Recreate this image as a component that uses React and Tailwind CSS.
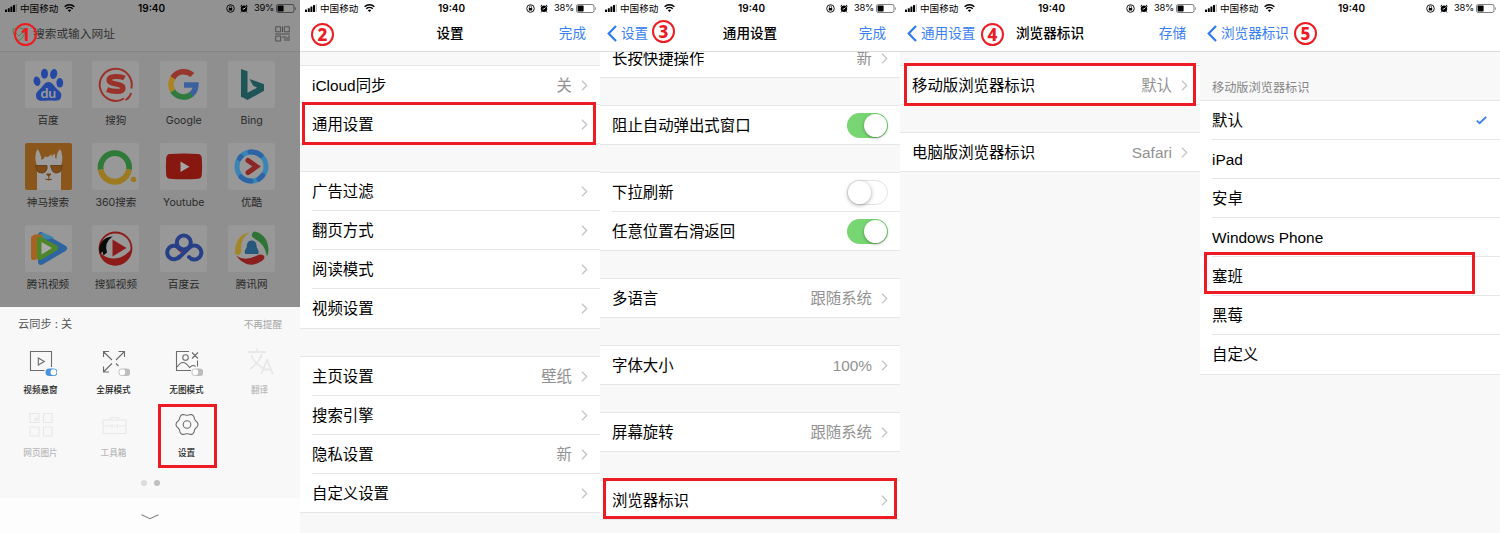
import clsx from "clsx";

const FONT = "font-['Inter','Noto_Sans_CJK_SC',sans-serif]";

function StatusBar({ battery }) {
  return (
    <div className="flex h-[16px] items-center pl-[5px] pr-[4px] text-[9.6px] leading-none text-black">
      <svg width="13" height="8" viewBox="0 0 13 8" className="shrink-0">
        <rect x="0" y="5.4" width="2" height="2.6" rx=".5" />
        <rect x="2.8" y="4.2" width="2" height="3.8" rx=".5" />
        <rect x="5.4" y="2.6" width="2" height="5.4" rx=".5" />
        <rect x="8" y="1" width="2" height="7" rx=".5" />
        <rect x="10.6" y="0" width="1.4" height="8" fillOpacity=".25" />
      </svg>
      <span className="ml-[2px] w-[39px] pt-px whitespace-nowrap">中国移动</span>
      <svg width="11" height="8" viewBox="0 0 11 8" className="ml-[5px]">
        <path d="M.6 2.8a7 7 0 0 1 9.8 0M2.3 4.7a4.6 4.6 0 0 1 6.4 0" fill="none" stroke="#000" strokeWidth="1.4" />
        <path d="M3.8 6.2a2.5 2.5 0 0 1 3.4 0L5.5 8z" />
      </svg>
      <span className="ml-[63px] w-[27px] text-[10px] font-semibold">19:40</span>
      <div className="ml-auto flex items-center">
        <svg width="9" height="9" viewBox="0 0 9 9">
          <circle cx="4.5" cy="4.5" r="3.8" fill="none" stroke="#000" strokeWidth=".9" />
          <rect x="2.8" y="4" width="3.4" height="2.5" />
          <path d="M3.4 4V3a1.1 1.1 0 0 1 2.2 0v1" fill="none" stroke="#000" strokeWidth=".6" />
        </svg>
        <svg width="8" height="9" viewBox="0 0 8 9" className="ml-[5px]">
          <circle cx="4" cy="4.8" r="3.2" />
          <path d="M.5 2.3 2 .9M7.5 2.3 6 .9M1.7 7.4l-.7 1M6.3 7.4l.7 1" stroke="#000" strokeWidth="1" />
          <path d="M4 5 5.6 3.4M4 5H2.6" stroke="#fff" strokeWidth=".8" />
        </svg>
        <span className="ml-[6px] w-[20px] whitespace-nowrap text-[9.4px] tracking-[-0.25px]">{battery}%</span>
        <svg width="20" height="9" viewBox="0 0 20 9" className="ml-[2px]">
          <rect x=".5" y=".5" width="17.500" height="8" rx="1.8" fill="none" stroke="#000" strokeOpacity=".5" />
          <rect x="1.6" y="1.6" width="6" height="5.8" rx=".6" />
          <path d="M19 3v3q.8-.4.8-1.5T19 3" fillOpacity=".5" />
        </svg>
      </div>
    </div>
  );
}

function Step({ n, className }) {
  return (
    <span
      className={clsx(
        "absolute z-20 flex size-[23px] items-center justify-center rounded-full border-2 border-[#ed1c24] font-['Noto_Sans','Open_Sans',sans-serif] text-[17px] leading-none font-extrabold text-[#ed1c24]",
        className
      )}>
      {n}
    </span>
  );
}

function Highlight({ className }) {
  return <div className={clsx("absolute z-20 border-3 border-[#ed1c24]", className)} />;
}

function NavBar({ back, title, action }) {
  return (
    <div className="relative z-10 grid h-[36px] grid-cols-[1fr_auto_1fr] items-center border-b border-[#dcdcdf] bg-white px-[14px] text-[13.6px] text-[#3a80f7]">
      <div className="-ml-[7px] flex items-center">
        {back && (
          <>
            <svg width="10" height="17" viewBox="0 0 10 17" className="mr-[4px]">
              <path d="M9 1 1.7 8.5 9 16" fill="none" stroke="#2f7bf6" strokeWidth="2.2" />
            </svg>
            <span className="whitespace-nowrap">{back}</span>
          </>
        )}
      </div>
      <span className="font-medium whitespace-nowrap text-black">{title}</span>
      <span className="text-right">{action}</span>
    </div>
  );
}

function Chevron() {
  return (
    <svg width="7" height="11" viewBox="0 0 7 11" className="ml-[9px] shrink-0">
      <path d="M1 .8 5.7 5.5 1 10.2" fill="none" stroke="#c4c4c8" strokeWidth="1.3" />
    </svg>
  );
}

function Switch({ on }) {
  return (
    <span
      className={clsx(
        "flex h-[25px] w-[41px] items-center rounded-full",
        on ? "justify-end bg-[#77d572] pr-px" : "border border-[#e4e4e6] bg-white"
      )}>
      <span
        className={clsx(
          "size-[23px] rounded-full bg-white",
          on ? "shadow-[0_1px_3px_rgba(0,0,0,0.35)]" : "shadow-[0_1px_4px_rgba(0,0,0,0.35)]"
        )}
      />
    </span>
  );
}

function Row({ row }) {
  return (
    <div className="group pl-[12px] last:pl-0">
      <div
        className={clsx(
          "flex items-center border-b border-[#e6e6e8] pr-[12px] font-['Liberation_Sans','Noto_Sans_CJK_SC',sans-serif] text-[15.4px] group-last:pl-[12px]",
          row.tall ? "h-[40px]" : "h-[39px]"
        )}>
        <span className="pt-px whitespace-nowrap text-black">{row.label}</span>
        <span className="ml-auto pt-px whitespace-nowrap text-[#929292]">{row.value}</span>
        {row.on !== undefined && <Switch on={row.on} />}
        {row.checked && (
          <svg width="11" height="9" viewBox="0 0 11 9" className="mr-px">
            <path d="M.8 4.6 3.6 7.3 10.2.9" fill="none" stroke="#3a80f7" strokeWidth="1.9" />
          </svg>
        )}
        {row.on === undefined && !row.plain && <Chevron />}
      </div>
    </div>
  );
}

function Group({ rows, className }) {
  return (
    <div className={clsx("border-t border-[#e6e6e8] bg-white", className)}>
      {rows.map((row) => (
        <Row key={row.label} row={row} />
      ))}
    </div>
  );
}

function Phone({ children, battery = 38, back, title, action }) {
  return (
    <section className="relative h-full w-[300px] shrink-0 overflow-hidden bg-[#f8f8f8]">
      <div className="relative z-10 bg-white">
        <StatusBar battery={battery} />
        <NavBar back={back} title={title} action={action} />
      </div>
      {children}
    </section>
  );
}

/* ---- site logos, all on a 47x47 tile ---- */

const logos = {
  百度: (
    <g fill="#2548a4">
      <ellipse cx="19.5" cy="12.8" rx="3.5" ry="5" />
      <ellipse cx="28.7" cy="13" rx="3.5" ry="5" transform="rotate(12 28.7 13)" />
      <ellipse cx="12" cy="20.300" rx="3.4" ry="4.8" transform="rotate(-12 12 20.300)" />
      <ellipse cx="34.800" cy="21.800" rx="3.4" ry="4.8" />
      <path d="M23.5 21c4 0 5.500 4.500 9 7.500 3.500 3 4.500 4.500 3.500 8-1.500 4.500-7 3-12.500 3s-10 1.500-12-2.500c-1.500-4 .5-6.500 3.500-9s4.500-7 8.500-7z" />
      <text x="23.3" y="37" fill="#999" fontSize="14" fontWeight="700" textAnchor="middle" fontFamily="Lato">
        du
      </text>
    </g>
  ),
  搜狗: (
    <g fill="none" stroke="#9b3229">
      <path d="M32 37.500A16 16 0 1 1 39.300 27.500" strokeWidth="2" />
      <path d="M33.500 39q4.500-2.500 5.500-7" strokeWidth="2" />
      <path d="M32.500 17c-4-2-15.500-2.600-15.500 2 0 5 14 3 14 8 0 5-10.500 3.700-16 1.600" strokeWidth="5.200" />
    </g>
  ),
  Google: (
    <g fill="none" strokeWidth="5.600">
      <path d="M32.300 14A12.700 12.700 0 0 0 12.800 17" stroke="#96362d" />
      <path d="M12.800 17a12.700 12.700 0 0 0 0 13" stroke="#ac8323" />
      <path d="M12.800 30a12.700 12.700 0 0 0 19 3" stroke="#2f7a3f" />
      <path d="M31.300 33.500q4.200-3.500 4.500-9.500H24" stroke="#3c619f" />
    </g>
  ),
  Bing: (
    <g fill="#1f5557">
      <path d="M13 8l6.500 2.200v22.300L13 36.500z" />
      <path d="M13 35.500l6.500-3.700 9.500-5-4-2.300-3.500-6.500L36 23.200v6.600L19.500 39z" />
    </g>
  ),
  神马搜索: (
    <g>
      <rect width="47" height="47" fill="#8b561c" />
      <path
        d="M12 47V24Q8.500 12 12.500 6q3.500 4.500 4 11l3-2-.5-1.500 4 .5 3.500-3v2.500L30 10.500v4l1.500 1.500Q31.500 10 35 6q4 6 1 18v23z"
        fill="#9c9c9c"
      />
      <path d="M10.500 22.500h11.500v3q-1 4.500-5.500 4.500T11.500 26zM25.500 22.500H37.500l-1 3.500q-1 4-5 4t-5-4.500z" fill="#7e4c18" stroke="#68411a" />
      <path d="M21.5 31h4.500l-2.200 2.500zM23.800 33.500V36M20.500 36q3.200 2 6.500 0" fill="#744314" stroke="#744314" />
    </g>
  ),
  "360搜索": (
    <g fill="none" strokeWidth="5.800">
      <path d="M8.700 26.500a14.300 14.300 0 1 1 28.300 0" stroke="#2f7a38" />
      <path d="M8.700 26.500a14.300 14.300 0 0 0 28.300 0" stroke="#9c7a22" />
      <circle cx="41.500" cy="36.500" r="2.800" fill="#9c7a22" stroke="none" />
    </g>
  ),
  Youtube: (
    <g>
      <path d="M10 11q14-1 28 0 3.500.3 3.800 4 .7 9 0 17-.3 3.500-3.800 3.800-14 1-28 0-3.500-.3-3.800-3.800-.7-8 0-17 .3-3.700 3.800-4z" fill="#861811" />
      <path d="M20.500 18.500v10.500l9-5.200z" fill="#a5a5a5" />
    </g>
  ),
  优酷: (
    <g fill="none" strokeLinecap="round">
      <circle cx="23.500" cy="23.500" r="14.500" stroke="#3a85b5" strokeWidth="5" />
      <path d="M13 13.500a14.500 14.500 0 0 0-1.500 2M34.500 32.500A14.500 14.500 0 0 1 31 36M22 9a14.500 14.500 0 0 1 11 3.500M13 34a14.500 14.500 0 0 0 10 4" stroke="#2c64a5" strokeWidth="5" />
      <path d="M20 17.500l8.500 6-8.500 6" stroke="#8c2627" strokeWidth="5" />
    </g>
  ),
  腾讯视频: (
    <g strokeLinejoin="round">
      <path d="M16 10v27l23-13.700z" fill="#2e649f" stroke="#2e649f" strokeWidth="6" />
      <path d="M14 9.500l4-1.700q6 2 11 5l-8 2z" fill="#3a85a8" />
      <path d="M8 13v20q4 0 8-4V12q-5-2-8 1z" fill="#a76321" stroke="#a76321" strokeWidth="4" />
      <path d="M15 15v17l15-9z" fill="#4f8629" stroke="#4f8629" strokeWidth="6" />
      <path d="M16.500 17v12.500l10.500-6.500z" fill="#aaa" />
    </g>
  ),
  搜狐视频: (
    <g>
      <circle cx="23.500" cy="23.500" r="16" fill="none" stroke="#8c1b19" strokeWidth="1.800" />
      <path d="M7 25c5 11 23 12 32-1-.500 11-9 16.500-16 16.500S8 36 7 25z" fill="#8c1b19" />
      <path d="M21 11.500q-12 .5-14 12.500l1 5 2.500-2.500 1 4 3.500-3q-3-10 5-15.500z" fill="#0b0b0b" />
      <path d="M20.500 14.500v17l14-8.500z" fill="#8c1b1c" />
    </g>
  ),
  百度云: (
    <g fill="none" stroke="#263f87" strokeWidth="4">
      <path d="M17 21.500l5.500 5" stroke="#7d2d35" />
      <circle cx="23.800" cy="17.500" r="7" />
      <path d="M19.500 31.500a6.800 6.800 0 1 1 0-8M18.500 33l11-10.500a7 7 0 1 1-.5 9.500" strokeLinecap="round" />
    </g>
  ),
  腾讯网: (
    <g>
      <path d="M21 7.500Q8.500 10 7 25q-.5 5 3 5t3.300-5Q12 14 21 7.500z" fill="#a4862a" />
      <path d="M26.500 6.500Q39 9 40.500 24q0 5-1.500 7.500Q37 19 27 14q-4-2-3-5t2.500-2.500z" fill="#2e7436" />
      <path d="M8 30.500q8 6 20 .5 5-2.500 7.500-.5t-1 5Q20 46 8 30.500z" fill="#8a1f1e" />
      <path d="M23.700 15.500c4 0 5 3.500 5 7 2 3 2.500 4 1.500 6.500H17.200c-1-2.500-.5-3.500 1.500-6.500 0-3.500 1-7 5-7z" fill="#25587a" />
    </g>
  ),
};

function Sites() {
  return (
    <div className="grid grid-cols-4 gap-x-[20.500px] px-[24.500px] pt-[9px]">
      {Object.keys(logos).map((name) => (
        <div key={name} className="flex h-[82px] w-[47px] flex-col items-center">
          <svg width="47" height="47" viewBox="0 0 47 47" className="shrink-0 rounded-[2px] bg-[#989898]">
            {logos[name]}
          </svg>
          <span className="mt-[5px] text-[10.600px] leading-[16px] whitespace-nowrap text-[#2a2a2a]">{name}</span>
        </div>
      ))}
    </div>
  );
}

function MiniSwitch({ on }) {
  return (
    <g stroke="none">
      <rect x="18.500" y="20.500" width="12" height="7.500" rx="3.750" fill={on ? "#4a94dc" : "#bdbdbd"} />
      <circle cx={on ? 26.5 : 22.3} cy="24.250" r="2.900" fill="#fff" />
    </g>
  );
}

// six soft lobes around the centre
const gearPath =
  "M" +
  Array.from({ length: 72 }, (_, i) => {
    const a = (i * Math.PI) / 36;
    const r = 10.1 + 0.9 * Math.cos(6 * a);
    return `${(14 + r * Math.cos(a)).toFixed(2)} ${(13.5 + r * Math.sin(a)).toFixed(2)}`;
  }).join("L") +
  "Z";

const tools = [
  {
    name: "视频悬窗",
    icon: (
      <>
        <path d="M17.500 22.500H3.500v-19h21v15.500M11.300 10v7l6-3.500z" />
        <MiniSwitch on />
      </>
    ),
  },
  {
    name: "全屏模式",
    icon: (
      <>
        <path d="M12 12 3.800 4M3.500 9V3.500H9M16 12l8-8M18.500 3.500h6v5.500M12 15.500l-8.200 8M3.500 18.500v5.500H9M16 15.500l2.500 2.500" />
        <MiniSwitch />
      </>
    ),
  },
  {
    name: "无图模式",
    icon: (
      <>
        <path d="M16 3.500H3.500v19H18M24.500 12.500v6M4 19q3-4.500 6-4.500t6.500 5q3.500-3.500 6-1M19 4.500l6 6M25 4.500l-6 6" />
        <circle cx="12.500" cy="9.500" r="2.800" />
        <MiniSwitch />
      </>
    ),
  },
  {
    name: "翻译",
    off: true,
    icon: <path d="M2 4h18M11 .5V4M5 7q4 9 12 13M16 6q-3 9-12 15M15 26.500l6-14.500 6 14.500M17 21.500h8" strokeWidth="1.800" />,
  },
  {
    name: "网页图片",
    off: true,
    icon: (
      <>
        <path d="M3 2.500h9v9H3zM16.500 2.500h8.500v9h-8.500zM3 16h9v9H3zM16.500 16h8.500v9h-8.500z" />
        <circle cx="9" cy="8.500" r="1.500" />
      </>
    ),
  },
  {
    name: "工具箱",
    off: true,
    icon: <path d="M3 9h23v13.500H3zM3 15h8M13.500 15h3M19 15h7M10.500 9V6.500h8V9M12 13v4M17.500 13v4" />,
  },
  {
    name: "设置",
    icon: (
      <>
        <path d={gearPath} />
        <circle cx="14" cy="13.500" r="3.800" />
      </>
    ),
  },
];

function Tools() {
  return (
    <div className="h-[191px] shrink-0 bg-[#f8f8f8]">
      <div className="flex items-center justify-between pt-[9px] pr-[18px] pl-[18px] leading-[17px]">
        <span className="text-[11.200px] text-[#555]">云同步 : 关</span>
        <span className="text-[9.600px] text-[#a5a5a5]">不再提醒</span>
      </div>
      <div className="grid grid-cols-4 gap-x-[13px] pt-[15px] pr-[11px] pl-[10px]">
        {tools.map((tool) => (
          <div
            key={tool.name}
            className={clsx("flex h-[63px] w-[61px] flex-col items-center", tool.off ? "text-[#b9b9b9]" : "text-[#222]")}>
            <svg
              width="32"
              height="29"
              viewBox="-2 0 32 29"
              fill="none"
              strokeWidth="1.100"
              className={clsx("shrink-0", tool.off ? "stroke-[#e8e8e8]" : "stroke-[#6c6c6c]")}>
              {tool.icon}
            </svg>
            <span className="mt-[6px] text-[8.600px] leading-[14px] font-medium">{tool.name}</span>
          </div>
        ))}
      </div>
      <div className="flex justify-center gap-[7px] pt-[6px]">
        <span className="size-[6px] rounded-full bg-[#dcdcdc]" />
        <span className="size-[6px] rounded-full bg-[#bfbfbf]" />
      </div>
    </div>
  );
}

function HomeScreen() {
  return (
    <section className="relative flex h-full w-[300px] shrink-0 flex-col overflow-hidden bg-[#fdfdfd]">
      <div className="h-[307px] shrink-0 bg-[#8f8f8f]">
        <div className="bg-[#929292]">
          <StatusBar battery={39} />
          <div className="flex h-[36px] items-center border-b border-[#858585] pr-[10px] pl-[12px]">
            <svg width="14" height="16" viewBox="0 0 14 16" fill="none" stroke="#55804e">
              <path d="M7 1.500Q10 3 13 3q0 8-6 11.500Q1 11 1 3q3 0 6-1.500zM4 7l3 3 5-5" />
            </svg>
            <span className="ml-[7px] pt-[2px] text-[11.700px] text-[#333]">搜索或输入网址</span>
            <svg width="15" height="16" viewBox="0 0 15 16" fill="none" stroke="#484848" strokeWidth=".9" className="ml-auto">
              <path d="M.7.8h5v5h-5zM9.300.8h5v5h-5zM7.500.500v5.500M0 8h15M.7 10h5v5h-5zM8 10v2M10 10v5M12 11v4M14 9.500V15" />
            </svg>
          </div>
        </div>
        <Sites />
      </div>
      <Tools />
      <div className="flex grow items-start justify-center bg-[#fdfdfd] pt-[16px]">
        <svg width="18" height="6" viewBox="0 0 18 6">
          <path d="M.5.8 9 4.700 17.500.8" fill="none" stroke="#858585" strokeWidth="1.100" />
        </svg>
      </div>
      <Step n={1} className="top-[23px] left-[14px]" />
      <Highlight className="top-[404px] left-[158px] h-[64px] w-[59px]" />
    </section>
  );
}

export default function App() {
  return (
    <main className={clsx("flex h-[533px] w-[1500px] overflow-hidden bg-[#f8f8f8]", FONT)}>
      <HomeScreen />

      <Phone title="设置" action="完成">
        <Group className="mt-[13px]" rows={[{ label: "iCloud同步", value: "关" }, { label: "通用设置" }]} />
        <Group
          className="mt-[27px]"
          rows={[{ label: "广告过滤" }, { label: "翻页方式" }, { label: "阅读模式" }, { label: "视频设置", tall: true }]}
        />
        <Group
          className="mt-[27px]"
          rows={[
            { label: "主页设置", value: "壁纸" },
            { label: "搜索引擎" },
            { label: "隐私设置", value: "新" },
            { label: "自定义设置" },
          ]}
        />
        <Step n={2} className="top-[23px] left-[11px]" />
        <Highlight className="top-[102px] left-[2px] h-[43px] w-[294px]" />
      </Phone>

      <Phone back="设置" title="通用设置" action="完成">
        <Group className="-mt-[14px]" rows={[{ label: "长按快捷操作", value: "新" }]} />
        <Group className="mt-[27px]" rows={[{ label: "阻止自动弹出式窗口", on: true }]} />
        <Group
          className="mt-[27px]"
          rows={[
            { label: "下拉刷新", on: false },
            { label: "任意位置右滑返回", on: true },
          ]}
        />
        <Group className="mt-[27px]" rows={[{ label: "多语言", value: "跟随系统" }]} />
        <Group className="mt-[27px]" rows={[{ label: "字体大小", value: "100%" }]} />
        <Group className="mt-[27px]" rows={[{ label: "屏幕旋转", value: "跟随系统" }]} />
        <Group className="mt-[28px]" rows={[{ label: "浏览器标识" }]} />
        <Step n={3} className="top-[20px] left-[52px]" />
        <Highlight className="top-[478px] left-[3px] h-[41px] w-[294px]" />
      </Phone>

      <Phone back="通用设置" title="浏览器标识" action="存储">
        <Group className="mt-[13px]" rows={[{ label: "移动版浏览器标识", value: "默认" }]} />
        <Group className="mt-[27px]" rows={[{ label: "电脑版浏览器标识", value: "Safari" }]} />
        <Step n={4} className="top-[23px] left-[81px]" />
        <Highlight className="top-[63px] left-[4px] h-[43px] w-[292px]" />
      </Phone>

      <Phone back="浏览器标识">
        <div className="flex h-[48px] items-end pb-[3px] pl-[12px] text-[12.200px] leading-[18px] text-[#858585]">移动版浏览器标识</div>
        <Group
          rows={[
            { label: "默认", checked: true, plain: true },
            { label: "iPad", plain: true },
            { label: "安卓", plain: true },
            { label: "Windows Phone", plain: true },
            { label: "塞班", plain: true },
            { label: "黑莓", plain: true },
            { label: "自定义", plain: true, tall: true },
          ]}
        />
        <Step n={5} className="top-[22px] left-[94px]" />
        <Highlight className="top-[252px] left-[4px] h-[42px] w-[271px]" />
      </Phone>
    </main>
  );
}
